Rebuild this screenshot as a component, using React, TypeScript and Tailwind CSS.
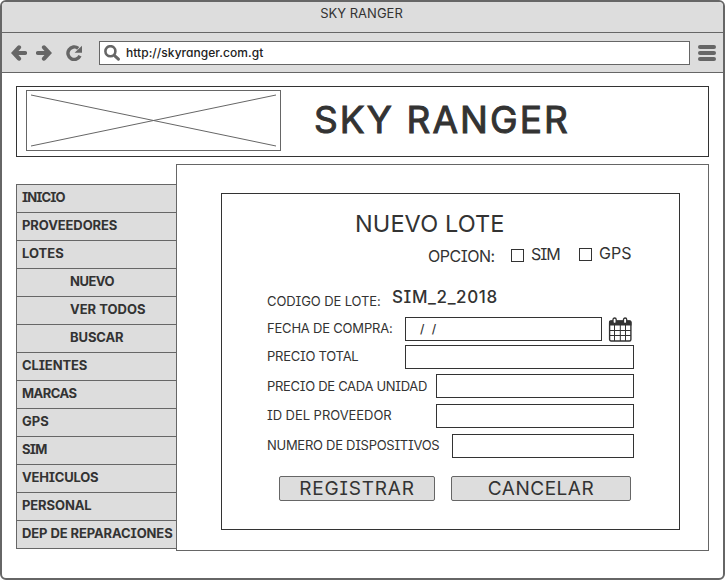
const menu = [
  { label: 'INICIO', tracking: 'tracking-[-0.9px]' },
  { label: 'PROVEEDORES', tracking: 'tracking-[-0.1px]' },
  { label: 'LOTES', tracking: '' },
  { label: 'NUEVO', tracking: 'tracking-[-0.5px]', sub: true },
  { label: 'VER TODOS', tracking: '', sub: true },
  { label: 'BUSCAR', tracking: 'tracking-[-0.1px]', sub: true },
  { label: 'CLIENTES', tracking: 'tracking-[-0.1px]' },
  { label: 'MARCAS', tracking: 'tracking-[-0.5px]' },
  { label: 'GPS', tracking: '' },
  { label: 'SIM', tracking: 'tracking-[-0.7px]' },
  { label: 'VEHICULOS', tracking: 'tracking-[-0.2px]' },
  { label: 'PERSONAL', tracking: 'tracking-[-0.1px]' },
  { label: 'DEP DE REPARACIONES', tracking: 'tracking-[-0.1px]' },
];

const fields = [
  { label: 'PRECIO TOTAL', row: 'mt-1', box: 'w-[229px]', line: 'leading-[22px]', tracking: 'tracking-[-0.25px]' },
  { label: 'PRECIO DE CADA UNIDAD', row: 'mt-[5px]', box: 'w-[198px]', line: 'leading-6', tracking: 'tracking-[-0.3px]' },
  { label: 'ID DEL PROVEEDOR', row: 'mt-1.5', box: 'w-[198px]', line: 'leading-[22px]', tracking: 'tracking-[-0.05px]' },
  { label: 'NUMERO DE DISPOSITIVOS', row: 'mt-1.5', box: 'w-[182px]', line: 'leading-[22px]', tracking: 'tracking-[-0.28px]' },
];

function TitleBar() {
  return (
    <div className="h-[31px] shrink-0 border-b border-[#666] bg-[#ddd] pr-0.5 text-center text-[13px] leading-[22px]">
      SKY RANGER
    </div>
  );
}

function Toolbar() {
  return (
    <div className="flex h-10 shrink-0 items-start border-b border-[#666] bg-[#ddd] pt-2 pl-[9px] text-[#666]">
      <svg className="mt-1 h-4 w-4" viewBox="0 0 16 16" fill="none" stroke="currentColor" strokeWidth="4.2" strokeLinecap="round" strokeLinejoin="miter">
        <path d="M8 2.4 2.8 8 8 13.6M4 8h10" />
      </svg>
      <svg className="mt-1 ml-[9px] h-4 w-4" viewBox="0 0 16 16" fill="none" stroke="currentColor" strokeWidth="4.2" strokeLinecap="round" strokeLinejoin="miter">
        <path d="M8 2.4 13.2 8 8 13.6M12 8H2" />
      </svg>
      <svg className="mt-1 ml-3.5 h-4 w-4" viewBox="0 0 16 16" fill="none" stroke="currentColor">
        <path d="M14 10.8A6.3 6.3 0 1 1 12.2 3.3" strokeWidth="3.4" />
        <path d="M16 .8V7.8H8.6Z" fill="currentColor" stroke="none" />
      </svg>
      <div className="ml-[17px] flex h-6 w-[591px] items-center border border-[#666] bg-white pl-1">
        <svg className="h-4 w-4" viewBox="0 0 16 16" fill="none" stroke="currentColor" strokeLinecap="round">
          <circle cx="6.4" cy="6.2" r="5" strokeWidth="2.6" />
          <path d="m10.8 10.8 3.6 3.4" strokeWidth="3" />
        </svg>
        <span className="ml-1.5 text-[12px] font-medium tracking-[0.05px] text-[#222]">http://skyranger.com.gt</span>
      </div>
      <div className="mt-1 ml-2 flex w-[18px] flex-col gap-0.5">
        <div className="h-1 rounded-full bg-[#666]" />
        <div className="h-1 rounded-full bg-[#666]" />
        <div className="h-1 rounded-full bg-[#666]" />
      </div>
    </div>
  );
}

function Header() {
  return (
    <header className="flex h-[71px] w-[693px] border border-[#333] pt-[3px] pl-[9px]">
      <svg className="h-[61px] w-[255px]" viewBox="0 0 255 61" fill="none" stroke="#666">
        <rect x=".5" y=".5" width="254" height="60" />
        <path d="M5 5 250 56M5 56 250 5" />
      </svg>
      <h1 className="ml-[33px] text-[37px] leading-[59px] tracking-[2.1px] whitespace-nowrap [-webkit-text-stroke:1px_#333] [stroke-linejoin:round]">
        SKY RANGER
      </h1>
    </header>
  );
}

function Sidebar() {
  return (
    <nav className="mt-5 h-[365px] w-40 border-b border-l border-[#666] bg-[#ddd]">
      {menu.map((m) => (
        <div
          key={m.label}
          className={`h-7 border-t border-[#666] text-[13px] leading-[25px] font-bold whitespace-nowrap ${m.sub ? 'pl-[53px]' : 'pl-[5px]'} ${m.tracking}`}
        >
          {m.label}
        </div>
      ))}
    </nav>
  );
}

function CalendarIcon() {
  return (
    <svg className="ml-1.5 h-[25px] w-6" viewBox="0 0 24 25" fill="none" stroke="#333">
      <rect x="1.6" y="4" width="21.3" height="20" rx="1.5" fill="#fff" strokeWidth="1.4" />
      <path d="M1 8.5V5Q1 3.5 2.5 3.5H22Q23.5 3.5 23.5 5V8.5Z" fill="#333" stroke="none" />
      <path d="M1.5 13.5H23M1.5 18.5H23M6.5 8V24M12.3 8V24M17.5 8V24" />
      <rect x="5" y="1" width="3.2" height="5.5" rx="1.6" fill="#fff" strokeWidth="1.3" />
      <rect x="15.5" y="1" width="3.2" height="5.5" rx="1.6" fill="#fff" strokeWidth="1.3" />
    </svg>
  );
}

function LotForm() {
  return (
    <section className="mt-7 ml-11 h-[337px] w-[459px] border border-[#333] pt-2.5 pl-[45px]">
      <h2 className="pl-[88px] text-[23.5px] leading-10 tracking-[0.1px]">NUEVO LOTE</h2>
      <div className="flex h-6 items-start pl-[161px] text-[16px]">
        <span className="w-[83px] leading-6 tracking-[-0.5px]">OPCION:</span>
        <span className="mt-[5px] h-[13px] w-[13px] border border-[#333]" />
        <span className="w-[55px] pl-[7px] leading-5 tracking-[-1px]">SIM</span>
        <span className="mt-1 h-[13px] w-[13px] border border-[#333]" />
        <span className="pl-[7px] leading-[18px]">GPS</span>
      </div>
      <div className="mt-[17px] flex h-8 items-start">
        <span className="w-[125px] pt-1 text-[13px] leading-6 tracking-[-0.1px]">CODIGO DE LOTE:</span>
        <span className="text-[17px] leading-[25px] font-medium tracking-[0.6px]">SIM_2_2018</span>
      </div>
      <div className="flex h-6 items-start text-[13px]">
        <span className="w-[138px] leading-[22px] tracking-[-0.2px]">FECHA DE COMPRA:</span>
        <span className="h-6 w-[197px] border border-[#333] pl-3.5 text-[12px] leading-[21px] font-medium tracking-[2px] whitespace-pre">/ /</span>
        <CalendarIcon />
      </div>
      {fields.map((f) => (
        <div key={f.label} className={`flex h-6 w-[367px] items-start justify-between text-[13px] ${f.row}`}>
          <span className={`whitespace-nowrap ${f.line} ${f.tracking}`}>{f.label}</span>
          <span className={`h-6 border border-[#333] ${f.box}`} />
        </div>
      ))}
      <div className="mt-[18px] flex gap-4 pl-3 text-[19px]">
        <button className="h-[25px] w-[156px] rounded-[2px] border border-[#666] bg-[#ddd] leading-[23px] tracking-[0.8px]">REGISTRAR</button>
        <button className="h-[25px] w-[180px] rounded-[2px] border border-[#666] bg-[#ddd] leading-[23px] tracking-[0.5px]">CANCELAR</button>
      </div>
    </section>
  );
}

export default function App() {
  return (
    <div className="flex h-[580px] w-[725px] flex-col overflow-hidden rounded-[6px] border-2 border-[#666] bg-white font-['Inter',sans-serif] text-[#333] [font-feature-settings:'cv08','cv11']">
      <TitleBar />
      <Toolbar />
      <div className="pt-[13px] pl-3.5">
        <Header />
        <div className="mt-[7px] flex items-start">
          <Sidebar />
          <main className="h-[387px] w-[533px] border border-[#666]">
            <LotForm />
          </main>
        </div>
      </div>
    </div>
  );
}
